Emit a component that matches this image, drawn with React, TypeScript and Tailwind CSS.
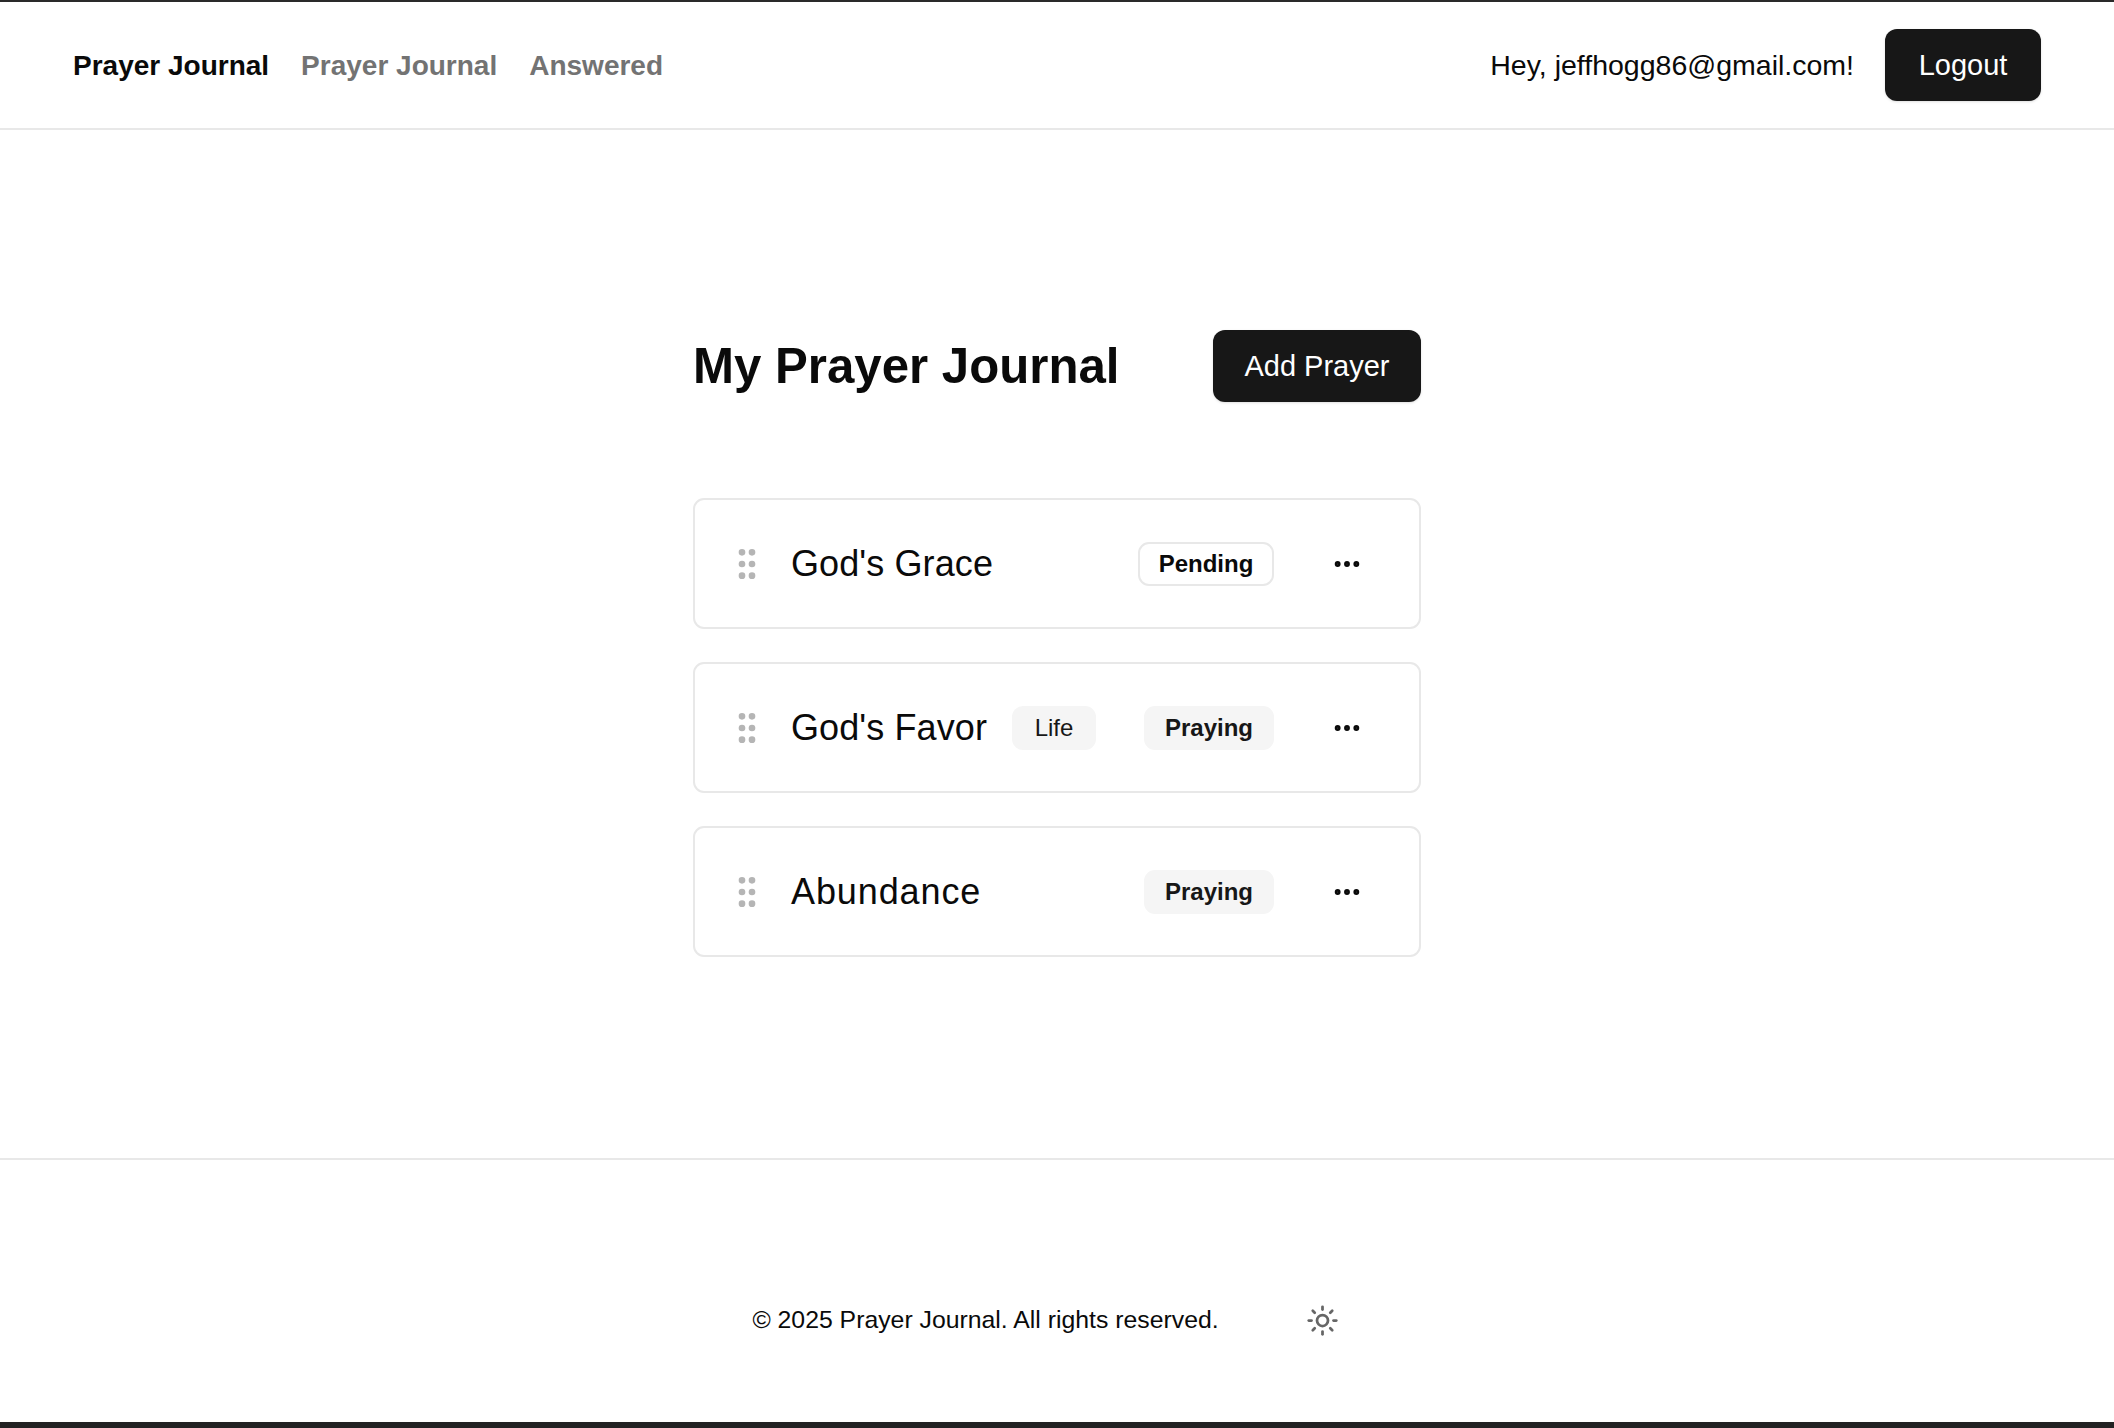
import { Ellipsis, GripVertical, Sun } from "lucide-react";

const prayers = [
  { title: "God's Grace", tag: "", status: "Pending", titleClass: "tracking-[0.1px]" },
  { title: "God's Favor", tag: "Life", status: "Praying", titleClass: "tracking-[0.1px]" },
  { title: "Abundance", tag: "", status: "Praying", titleClass: "tracking-[0.9px]" },
];

function PrayerCard({ title, tag, status, titleClass }: { title: string; tag: string; status: string; titleClass: string }) {
  return (
    <div className="flex h-[131px] items-center rounded-[11px] border-2 border-[#e8e8e8] pl-[32px] pr-[56px]">
      <GripVertical size={40} strokeWidth={2} className="shrink-0 text-[#b5b5b5]" />
      <span className={`ml-[24px] text-[36px] leading-none text-[#0a0a0a] ${titleClass}`}>{title}</span>
      {tag && (
        <span className="ml-[25px] flex h-[44px] w-[84px] items-center justify-center rounded-[11px] bg-[#f5f5f5] text-[24px] text-[#171717]">
          {tag}
        </span>
      )}
      <span
        className={
          status === "Pending"
            ? "ml-auto flex h-[44px] w-[136px] items-center justify-center rounded-[11px] border-2 border-[#e8e8e8] text-[24px] font-semibold text-[#0a0a0a]"
            : "ml-auto flex h-[44px] w-[130px] items-center justify-center rounded-[11px] bg-[#f5f5f5] text-[24px] font-semibold text-[#171717]"
        }
      >
        {status}
      </span>
      <Ellipsis size={32} strokeWidth={2.4} className="ml-[57px] shrink-0 text-[#0a0a0a]" />
    </div>
  );
}

export default function App() {
  return (
    <div className="flex h-screen w-full flex-col overflow-hidden border-t-2 border-b-[6px] border-t-[#2a2a2a] border-b-[#222222] bg-white font-['Liberation_Sans',sans-serif]">
      {/* navbar */}
      <header className="flex h-[128px] shrink-0 items-center justify-between border-b-2 border-[#e8e8e8] px-[73px]">
        <nav className="flex items-center gap-[32px] pt-[1px] text-[28px] font-semibold">
          <span className="text-[#0a0a0a]">Prayer Journal</span>
          <span className="text-[#737373]">Prayer Journal</span>
          <span className="text-[#737373]">Answered</span>
        </nav>
        <div className="flex items-center gap-[31px]">
          <span className="pt-[1px] text-[28.5px] text-[#0a0a0a]">Hey, jeffhogg86@gmail.com!</span>
          <button className="flex h-[72px] w-[156px] items-center justify-center rounded-[12px] bg-[#171717] pt-[1px] text-[29px] text-white shadow-sm">
            Logout
          </button>
        </div>
      </header>

      {/* main */}
      <main className="flex flex-1 justify-center pt-[200px]">
        <div className="w-[728px]">
          <div className="flex items-center justify-between">
            <h1 className="text-[49.2px] font-bold leading-none text-[#0a0a0a]">My Prayer Journal</h1>
            <button className="flex h-[72px] w-[208px] items-center justify-center rounded-[12px] bg-[#171717] pt-[1px] text-[29px] text-white shadow-sm">
              Add Prayer
            </button>
          </div>
          <div className="mt-[96px] flex flex-col gap-[33px]">
            {prayers.map((p) => (
              <PrayerCard key={p.title} {...p} />
            ))}
          </div>
        </div>
      </main>

      {/* footer */}
      <footer className="flex h-[264px] shrink-0 justify-center border-t-2 border-[#e8e8e8] pr-[23px] pt-[142px]">
        <div className="flex h-[36px] items-center">
          <span className="text-[24.8px] text-[#0a0a0a]">© 2025 Prayer Journal. All rights reserved.</span>
          <Sun size={33} strokeWidth={2} className="ml-[87px] text-[#666666]" />
        </div>
      </footer>
    </div>
  );
}
